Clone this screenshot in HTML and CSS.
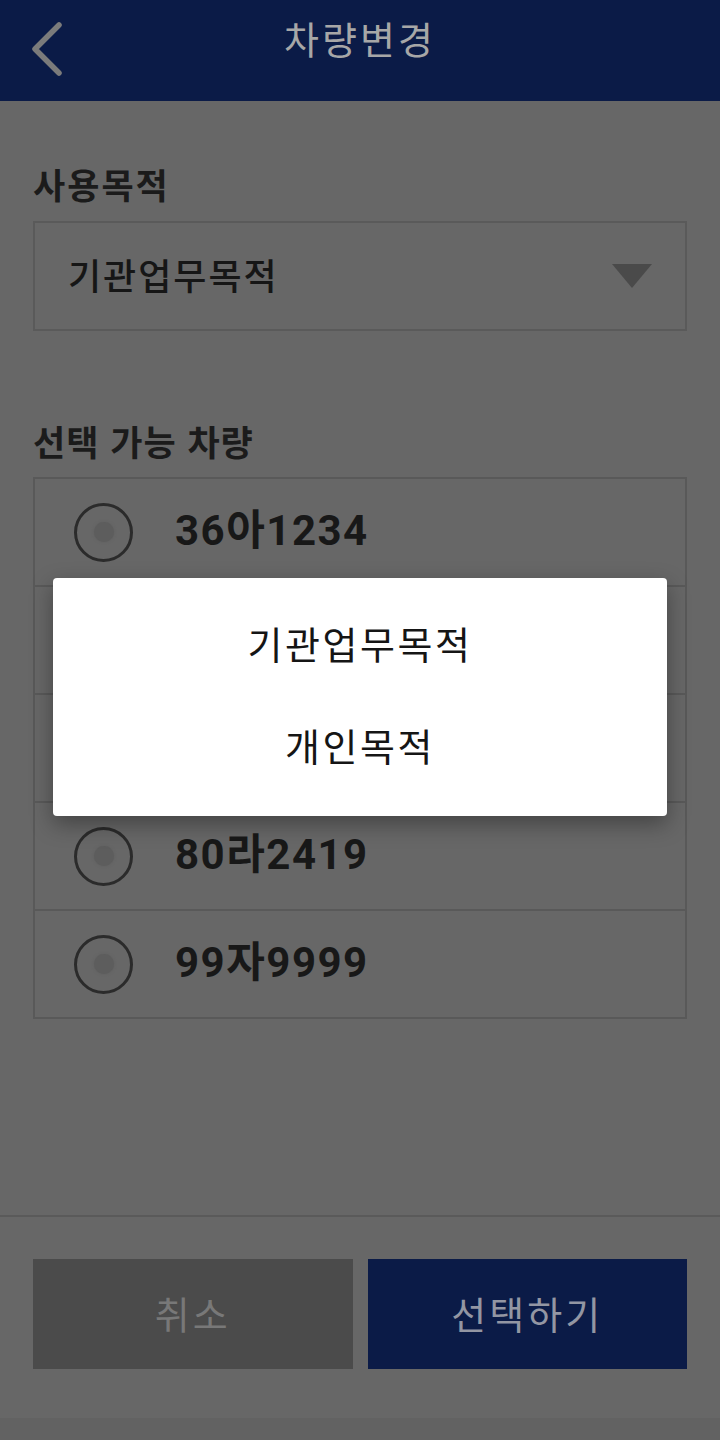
FILE: index.html
```html
<!DOCTYPE html>
<html lang="ko">

<head>
    <meta charset="UTF-8">
    <meta name="viewport" content="width=device-width, initial-scale=1.0">
    <title>차량변경</title>
    <link rel="stylesheet" href="styles.css">
</head>

<body>
    <div class="page">
        <header class="topbar">
            <button class="back" aria-label="뒤로">
                <svg width="34" height="58" viewBox="0 0 34 58">
                    <polyline points="29,5 5,29 29,53" fill="none" stroke="#7b7b7b" stroke-width="5.5"
                        stroke-linecap="round" stroke-linejoin="round" />
                </svg>
            </button>
            <h1 class="title">차량변경</h1>
            <div></div>
        </header>

        <main class="content">
            <h2 class="label">사용목적</h2>
            <div class="select">
                <span class="select-value">기관업무목적</span>
                <svg class="caret" width="40" height="24" viewBox="0 0 40 24">
                    <polygon points="0,0 40,0 20,24" fill="#4a4a4a" />
                </svg>
            </div>

            <h2 class="label label-cars">선택 가능 차량</h2>
            <ul class="car-list">
                <li class="car"><span class="radio"></span><span class="plate">36아1234</span></li>
                <!-- rows 2 and 3 sit under the popup -->
                <li class="car"><span class="radio"></span></li>
                <li class="car"><span class="radio"></span></li>
                <li class="car"><span class="radio"></span><span class="plate">80라2419</span></li>
                <li class="car"><span class="radio"></span><span class="plate">99자9999</span></li>
            </ul>
        </main>

        <footer class="actions">
            <div class="buttons">
                <button class="btn btn-cancel">취소</button>
                <button class="btn btn-select">선택하기</button>
            </div>
            <div class="navstrip"></div>
        </footer>
    </div>

    <!-- spinner popup shown over the dimmed page -->
    <div class="overlay">
        <ul class="dialog">
            <li class="option">기관업무목적</li>
            <li class="option">개인목적</li>
        </ul>
    </div>
</body>

</html>
```

FILE: styles.css
```css
* {
    box-sizing: border-box;
    margin: 0;
    padding: 0;
}

body {
    background-color: #676767;
    font-family: "Noto Sans CJK KR", "Noto Sans", sans-serif;
    color: #1c1c1c;
}

.page {
    display: flex;
    flex-direction: column;
    min-height: 1440px;
}

/* header */
.topbar {
    display: grid;
    grid-template-columns: 1fr auto 1fr;
    align-items: center;
    height: 101px;
    background-color: #0b1b47;
}

.back {
    justify-self: start;
    display: flex;
    margin-left: 30px;
    margin-top: -4px;
    background: none;
    border: none;
}

.title {
    font-size: 38px;
    font-weight: 400;
    letter-spacing: 3px;
    line-height: 44px;
    color: #a7a7a7;
    margin-top: -26px;
}

/* form */
.content {
    flex: 1;
    padding: 63px 33px 0;
}

.label {
    font-size: 35px;
    font-weight: 700;
    letter-spacing: 2px;
    line-height: 40px;
    color: #1b1b1b;
}

.select {
    display: flex;
    align-items: center;
    justify-content: space-between;
    height: 110px;
    margin-top: 17px;
    padding: 0 33px 0 33px;
    border: 2px solid #5a5a5a;
}

.select-value {
    font-size: 36px;
    font-weight: 500;
    letter-spacing: 2px;
    line-height: 40px;
    margin-bottom: 4px;
    color: #161616;
}

.label-cars {
    margin-top: 90px;
    letter-spacing: 1px;
}

.car-list {
    list-style: none;
    margin-top: 16px;
    border: 2px solid #595959;
}

.car {
    display: flex;
    align-items: center;
    height: 108px;
    padding-left: 39px;
    border-bottom: 2px solid #595959;
}

.car:last-child {
    height: 106px;
    border-bottom: none;
}

.radio {
    width: 59px;
    height: 59px;
    border: 3px solid #2b2b2b;
    border-radius: 50%;
    display: flex;
    align-items: center;
    justify-content: center;
}

.radio::after {
    content: "";
    width: 20px;
    height: 20px;
    border-radius: 50%;
    background-color: #5d5d5d;
    box-shadow: 0 0 3px #5d5d5d;
}

.plate {
    margin-left: 42px;
    margin-bottom: 11px;
    font-family: Roboto, "Noto Sans CJK KR", sans-serif;
    font-size: 42px;
    font-weight: 700;
    letter-spacing: 1.5px;
    color: #181818;
}

/* bottom buttons */
.actions {
    border-top: 2px solid #5a5a5a;
}

.buttons {
    display: grid;
    grid-template-columns: 1fr 1fr;
    gap: 15px;
    padding: 42px 33px 49px;
}

.btn {
    height: 110px;
    border: none;
    padding-bottom: 4px;
    font-family: "Noto Sans CJK KR", sans-serif;
    font-size: 38px;
    letter-spacing: 3px;
}

.btn-cancel {
    background-color: #4b4b4b;
    color: #787878;
}

.btn-select {
    background-color: #0b1b47;
    color: #9396a3;
}

.navstrip {
    height: 22px;
    background-color: #626262;
}

/* popup */
.overlay {
    position: absolute;
    left: 0;
    top: 0;
    width: 720px;
    display: flex;
    justify-content: center;
    padding-top: 578px;
}

.dialog {
    list-style: none;
    width: 614px;
    padding: 17px 0;
    background-color: #ffffff;
    border-radius: 4px;
    box-shadow: 0 8px 22px rgba(0, 0, 0, 0.35);
}

.option {
    display: flex;
    align-items: center;
    justify-content: center;
    height: 102px;
    padding-bottom: 7px;
    font-size: 38px;
    letter-spacing: 2.5px;
    color: #151515;
}
```
